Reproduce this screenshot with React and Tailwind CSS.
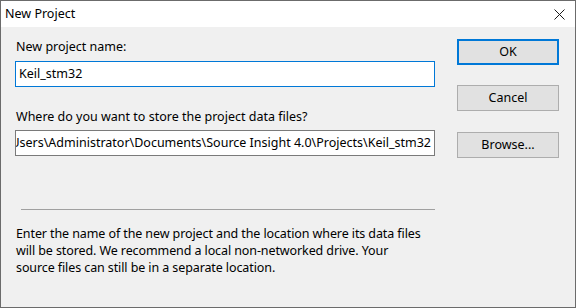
import React from 'react'

const font = { fontFamily: '"Noto Sans", "Liberation Sans", sans-serif' }

const DialogButton = ({ label, primary, className = '' }) => {
    return (
        <button
            className={(primary
                ? 'block h-[26px] w-[102px] bg-[#e1e1e1] border-2 border-[#0078d7] text-[12.5px] text-black '
                : 'block h-[26px] w-[102px] bg-[#e1e1e1] border border-[#adadad] text-[12.5px] text-black ') + className}
        >
            {label}
        </button>
    )
}

const App = () => {
    return (
        <div className="w-[576px] h-[308px] border border-[#6b6b6b] bg-[#f0f0f0] flex flex-col text-black" style={font}>
            <div className="h-[26px] bg-white flex items-center justify-between pl-[4px] pr-[10px]">
                <span className="text-[12.5px] leading-none">New Project</span>
                <svg width="11" height="11" viewBox="0 0 11 11">
                    <path d="M0.5 0.5 L10.5 10.5 M10.5 0.5 L0.5 10.5" stroke="#1a1a1a" strokeWidth="1" fill="none" />
                </svg>
            </div>
            <div className="flex flex-1 px-[14px] pt-[12px]">
                <div className="w-[420px] flex flex-col">
                    <label className="text-[12.5px] leading-[16px] pl-[1px]">New project name:</label>
                    <div className="mt-[6px] h-[26px] border border-[#0078d7] bg-white flex items-center px-[3px] text-[12.5px]">
                        Keil_stm32
                    </div>
                    <label className="mt-[22px] text-[12.5px] leading-[16px] pl-[1px]">Where do you want to store the project data files?</label>
                    <div className="mt-[5px] h-[26px] border border-[#7a7a7a] bg-white flex items-center justify-end overflow-hidden px-[3px] text-[12.5px] whitespace-nowrap">
                        C:\Users\Administrator\Documents\Source Insight 4.0\Projects\Keil_stm32
                    </div>
                    <div className="mt-[53px] ml-[6px] h-px bg-[#a0a0a0]"></div>
                    <p className="mt-[15px] pl-[1px] text-[12.5px] leading-[17px] tracking-[-0.1px] whitespace-nowrap">
                        Enter the name of the new project and the location where its data files<br />
                        will be stored. We recommend a local non-networked drive. Your<br />
                        source files can still be in a separate location.
                    </p>
                </div>
                <div className="ml-[22px] flex flex-col">
                    <DialogButton label="OK" primary />
                    <DialogButton label="Cancel" className="mt-[20px]" />
                    <DialogButton label="Browse..." className="mt-[21px]" />
                </div>
            </div>
        </div>
    )
}

export default App
